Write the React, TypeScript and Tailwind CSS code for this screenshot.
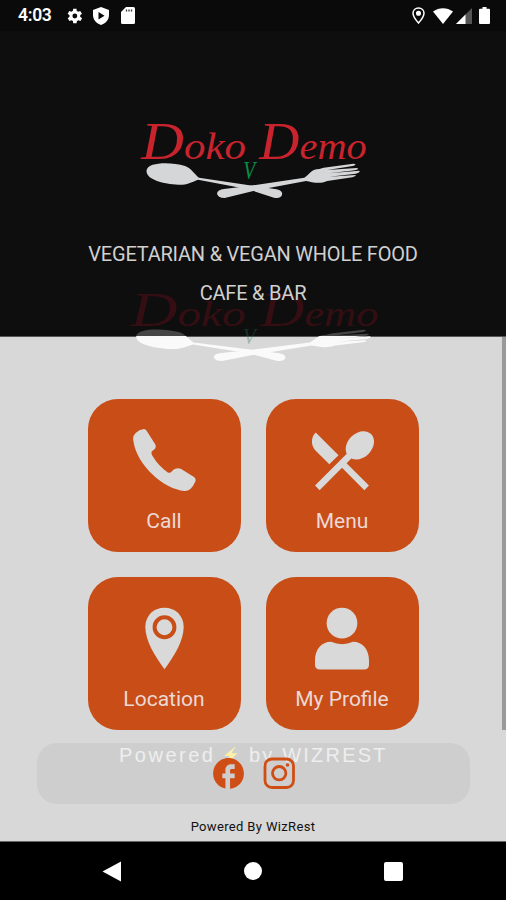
import type { ReactNode } from "react";
import { MdFacebook, MdRestaurantMenu } from "react-icons/md";

const PhoneIcon = () => (
  <svg viewBox="0 0 190 190" className="w-[63px] h-[63px]" fill="currentColor">
    <path d="M1 35Q-2 22 8 12Q18 2 33 0Q38 0 41 5L67 46Q71 55 65 61L57 67Q54 73 58 80Q77 112 105 131Q112 134 117 128Q121 122 128 120Q136 116 144 120L184 145Q191 150 188 158Q175 188 155 187C96 183 10 110 1 35Z" />
  </svg>
);

const PinIcon = () => (
  <svg viewBox="0 0 118 188" className="w-[39px] h-[63px]">
    <path d="M59 1C26 1 1 25 1 59C1 101 30 147 59 187C88 147 117 101 117 59C117 25 92 1 59 1Z" fill="currentColor" />
    <circle cx="59" cy="60" r="30" fill="none" stroke="#c94d17" strokeWidth="12" />
  </svg>
);

const UserIcon = () => (
  <svg viewBox="0 0 162 188" className="w-[54px] h-[63px]" fill="currentColor">
    <circle cx="81" cy="48" r="46" />
    <path d="M48 104Q81 118 114 104C143 104 162 128 162 160V172Q162 187 147 187H15Q0 187 0 172V160C0 128 19 104 48 104Z" />
  </svg>
);

const tiles = [
  { label: "Call", icon: <PhoneIcon /> },
  { label: "Menu", icon: <MdRestaurantMenu className="w-[78px] h-[78px] -mt-2 shrink-0" /> },
  { label: "Location", icon: <PinIcon /> },
  { label: "My Profile", icon: <UserIcon /> },
];

function Logo({ className, faded = false }: { className: string; faded?: boolean }) {
  const red = faded ? "#350e13" : "#c9232d";
  const metal = faded ? "url(#fade)" : "#d5d6d8";
  return (
    <svg viewBox="0 0 780 300" preserveAspectRatio="none" className={className}>
      <defs>
        <linearGradient id="fade" gradientUnits="userSpaceOnUse" x1="0" y1="0" x2="0" y2="300">
          <stop offset="0.6" stopColor="#454545" />
          <stop offset="0.61" stopColor="#fafafa" />
        </linearGradient>
      </defs>
      <g fill={red} fontFamily="'Liberation Serif', serif" fontStyle="italic">
        <text x="64" y="147" fontSize="160" textLength="314" lengthAdjust="spacingAndGlyphs">
          D<tspan fontSize="116">oko</tspan>
        </text>
        <text x="418" y="147" fontSize="160" textLength="322" lengthAdjust="spacingAndGlyphs">
          D<tspan fontSize="116">emo</tspan>
        </text>
      </g>
      <text
        x="370"
        y="208"
        fontSize="76"
        textLength="36"
        lengthAdjust="spacingAndGlyphs"
        fill={faded ? "#1f7a5a" : "#078e4b"}
        fillOpacity={faded ? 0.35 : 1}
        fontFamily="'Liberation Serif', serif"
        fontStyle="italic"
      >
        V
      </text>
      <g fill={metal}>
        {/* spoon */}
        <path d="M80 180C84 156 153 155 195 168C214 174 224 194 237 203L470 238Q489 242 486 255Q481 267 462 263L385 238L234 209C212 218 200 225 175 224C130 222 75 208 80 180Z" />
        {/* fork */}
        <path d="M553 203C574 189 574 177 598 177L611 173L700 161Q714 163 698 168L622 180L710 174Q722 177 704 181L628 190L717 182Q724 186 708 191L628 200L706 195Q711 198 697 202L622 213C600 223 577 217 558 213L400 243L314 264Q292 264 291 250Q293 239 312 237L385 228Z" />
      </g>
    </svg>
  );
}

function StatusBar() {
  return (
    <div className="flex h-[31px] items-center bg-[#0a0a0a] pl-[18px] pr-[16px] text-white">
      <span className="text-[17.5px] font-semibold leading-none tracking-[-0.3px]">4:03</span>
      <svg viewBox="0 0 24 24" className="ml-[12px] h-[20px] w-[20px]" fill="currentColor">
        <path d="M19.4 13a7.5 7.5 0 0 0 0-2l2.1-1.6-2-3.5-2.5 1a7 7 0 0 0-1.7-1L15 3.3h-4l-.4 2.6a7 7 0 0 0-1.7 1l-2.5-1-2 3.5L6.6 11a7.5 7.5 0 0 0 0 2l-2.1 1.600 2 3.500 2.500-1a7 7 0 0 0 1.700 1l.4 2.600h4l.4-2.600a7 7 0 0 0 1.700-1l2.500 1 2-3.500zM13 14.900a2.900 2.900 0 1 1 0-5.800 2.900 2.900 0 0 1 0 5.800z" />
      </svg>
      <svg viewBox="0 0 16 18" className="ml-[9px] h-[18px] w-[16px]">
        <path d="M8 0l8 3v5c0 5-3.500 8.500-8 10C3.500 16.500 0 13 0 8V3z" fill="white" />
        <path d="M5.500 5l6 3.800-6 3.800z" fill="#0a0a0a" />
      </svg>
      <svg viewBox="0 0 14 17" className="ml-[12px] h-[17px] w-[14px]">
        <path d="M5 0h7.500Q14 0 14 1.500v14q0 1.500-1.500 1.500h-11Q0 17 0 15.500V5z" fill="white" />
        <path d="M5.500 2.500v2M8 2.500v2M10.500 2.500v2" stroke="#333" strokeWidth="1.300" />
      </svg>
      <svg viewBox="0 0 13 17" className="ml-auto h-[17px] w-[13px]" fill="none" stroke="white" strokeWidth="1.500">
        <path d="M6.500 1C3.300 1 1 3.300 1 6.300c0 3.700 5.500 9.700 5.500 9.700S12 10 12 6.300C12 3.300 9.700 1 6.500 1z" />
        <circle cx="6.500" cy="6.300" r="1.800" fill="white" />
      </svg>
      <svg viewBox="0 0 20 16" className="ml-[8px] h-[16px] w-[20px]" fill="white">
        <path d="M0 3.500C6-1 14-1 20 3.500L10 16z" />
      </svg>
      <svg viewBox="0 0 16 16" className="ml-[3px] h-[16px] w-[16px]">
        <path d="M16 0v16H0z" fill="#555" />
        <path d="M9.500 6.500V16H0z" fill="white" />
      </svg>
      <svg viewBox="0 0 11 17" className="ml-[7px] h-[17px] w-[11px]" fill="white">
        <path d="M3.500 0h4v1.700H10q1 0 1 1V16q0 1-1 1H1q-1 0-1-1V2.700q0-1 1-1h2.500z" />
      </svg>
    </div>
  );
}

function Tile({ label, icon }: { label: string; icon: ReactNode }) {
  return (
    <button className="flex h-[153px] w-[153px] flex-col items-center rounded-[30px] bg-[#c94d17] pt-[30px] text-[#d9d9d9]">
      <div className="flex h-[63px] items-start">{icon}</div>
      <span className="mt-[17px] text-[21px] leading-6 text-[#ecd9d5]">{label}</span>
    </button>
  );
}

export default function App() {
  return (
    <div className="relative flex h-[900px] w-[506px] flex-col overflow-hidden bg-[#d8d8d8] font-['Roboto',sans-serif]">
      <header className="h-[337px] shrink-0 border-b border-[#555] bg-[#0e0e0e]">
        <StatusBar />
        <Logo className="mt-[79px] ml-[120px] h-[100px] w-[260px]" />
        <p className="relative z-10 mt-[25px] text-center text-[20px] leading-[39px] tracking-[-0.22px] text-[#d0d0d0]">
          VEGETARIAN &amp; VEGAN WHOLE FOOD
          <br />
          CAFE &amp; BAR
        </p>
      </header>

      {/* splash artwork that shows through the page */}
      <Logo faded className="absolute top-[281px] left-[107px] h-[91px] w-[286px]" />

      <main className="flex grow flex-col items-center">
        <div className="mt-[62px] grid grid-cols-2 gap-[25px]">
          {tiles.map((tile) => (
            <Tile key={tile.label} {...tile} />
          ))}
        </div>

        <div className="relative mt-[13px] ml-px flex h-[61px] w-[433px] justify-center rounded-[20px] bg-[#cecece] pt-[12px] pr-[2px] text-[#cf4e15]">
          <div className="absolute top-[1px] left-[82px] flex items-center whitespace-nowrap font-['Liberation_Sans',sans-serif] text-[20px] leading-[22px] text-white/65">
            <span className="w-[103px] tracking-[2.5px]">Powered</span>
            <svg viewBox="0 0 16 20" className="mr-[10px] h-[18px] w-[17px]">
              <path d="M14 0L1 11h6l-4 9 13-12H9z" fill="#fff0a8" />
            </svg>
            <span className="tracking-[2.2px]">by WIZREST</span>
          </div>
          <MdFacebook className="relative h-[37px] w-[37px]" />
          <svg viewBox="0 0 32 32" className="relative mt-[2px] ml-[16px] h-[32px] w-[32px]" fill="none" stroke="currentColor" strokeWidth="2.800">
            <rect x="2" y="2" width="28.500" height="28.500" rx="7" />
            <circle cx="16.200" cy="16.200" r="6.700" />
            <circle cx="24.500" cy="8" r="1.800" fill="currentColor" stroke="none" />
          </svg>
        </div>

        <p className="mt-[14px] text-[13px] leading-[17px] tracking-[0.35px] text-[#111]">Powered By WizRest</p>
      </main>

      <div className="absolute top-[337px] right-0 h-[393px] w-[4px] bg-[#999]" />

      <nav className="relative flex h-[59px] shrink-0 items-center justify-between border-t border-[#666] bg-black pr-[103px] pl-[102px]">
        <svg viewBox="0 0 20 21" className="h-[21px] w-[20px]" fill="white">
          <path d="M19 0.500V20.500L0.500 10.500z" />
        </svg>
        <div className="h-[18px] w-[18px] rounded-full bg-white" />
        <div className="h-[19px] w-[19px] rounded-[2px] bg-white" />
      </nav>
    </div>
  );
}
